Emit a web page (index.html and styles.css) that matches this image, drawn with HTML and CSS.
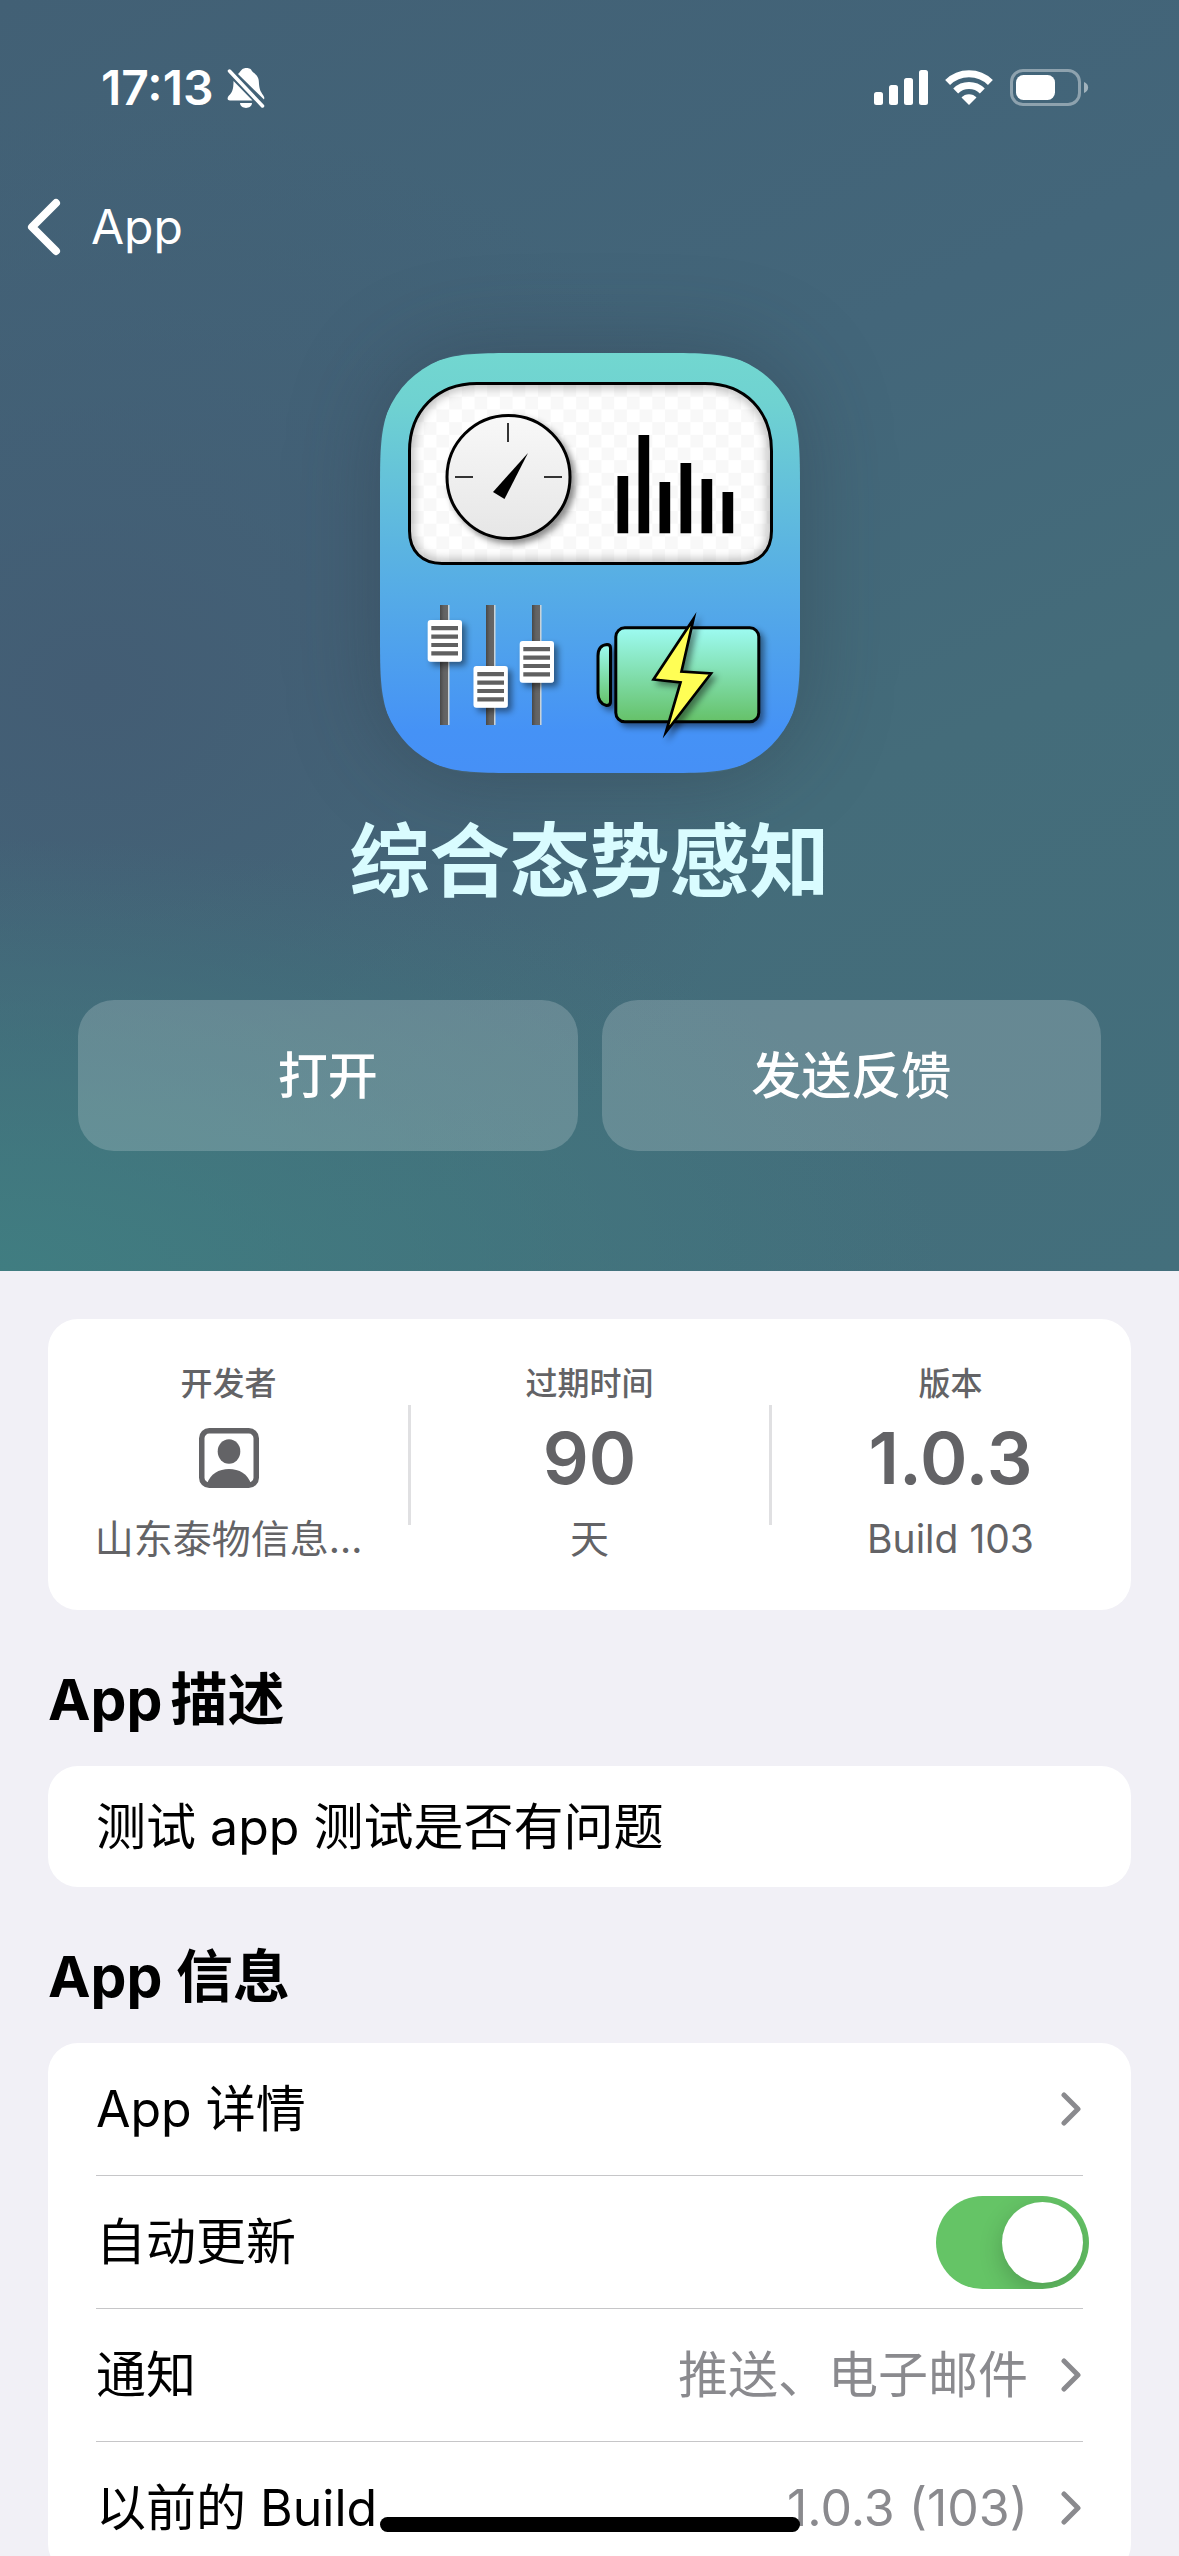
FILE: index.html
```html
<!DOCTYPE html>
<html lang="zh-CN">
<head>
<meta charset="utf-8">
<meta name="viewport" content="width=device-width, initial-scale=1">
<title>综合态势感知</title>
<link rel="stylesheet" href="styles.css">
</head>
<body>
<div class="screen">
  <header class="hero">
    <div class="status">
      <span class="status-left">
        <span class="clock">17:13</span>
        <svg class="bell" width="38" height="42" viewBox="0 0 38 42" fill="#fff" aria-hidden="true">
          <path d="M11 7 C13 5 13.500 4 15 2.500 C17 0.500 22 0.500 24 2.500 C25 4 25 4.500 27 6 C31 9 32 12 32 17 C32.500 23 34 25 36 28 C37.500 30 37.500 31 37 32.500 Z"/>
          <path d="M6.500 14 L25.500 33.500 H3 C0 33.500 0 30.500 2 28.500 C5 25.500 6.500 23 6.500 14 Z"/>
          <path d="M13 36 H25 C24.500 42.500 13.500 42.500 13 36 Z"/>
          <path d="M2.500 4 L35.500 39" stroke="#fff" stroke-width="3.500" stroke-linecap="round"/>
        </svg>
      </span>
      <span class="status-right">
        <svg width="54" height="36" viewBox="0 0 54 36" fill="#fff" aria-hidden="true">
          <rect x="0" y="22" width="9" height="13" rx="2.500"/>
          <rect x="15" y="15" width="9" height="20" rx="2.500"/>
          <rect x="30" y="8" width="9" height="27" rx="2.500"/>
          <rect x="45" y="0" width="9" height="35" rx="2.500"/>
        </svg>
        <svg width="48" height="36" viewBox="0 0 48 36" fill="none" stroke="#fff" aria-hidden="true">
          <path d="M2.600 12.600 A30.500 30.500 0 0 1 45.400 12.600" stroke-width="7"/>
          <path d="M10.700 21 A19 19 0 0 1 37.300 21" stroke-width="7"/>
          <path d="M16.500 27.500 C20 23 28 23 31.500 27.500 L24 35 Z" fill="#fff" stroke="none"/>
        </svg>
        <svg width="79" height="38" viewBox="0 0 79 38" fill="none" aria-hidden="true">
          <rect x="1.500" y="1.500" width="68" height="34" rx="11.500" stroke="#fff" stroke-opacity=".4" stroke-width="3"/>
          <rect x="6" y="6" width="39" height="25" rx="7.500" fill="#fff"/>
          <path d="M74 13 C79.500 15 79.500 22 74 24 Z" fill="#fff" fill-opacity=".5"/>
        </svg>
      </span>
    </div>
    <nav class="nav">
      <a class="back" href="#">
        <svg width="34" height="58" viewBox="0 0 34 58" fill="none" stroke="#fff" stroke-width="8" stroke-linecap="round" stroke-linejoin="round" aria-hidden="true"><path d="M29 5 L5 29 L29 53"/></svg>
        <span>App</span>
      </a>
    </nav>
    <svg class="app-icon" viewBox="0 0 420 420" aria-hidden="true">
      <defs>
        <linearGradient id="sky" x1="0" y1="0" x2="0" y2="1">
          <stop offset="0" stop-color="#72d7d0"/><stop offset=".12" stop-color="#6fd2d1"/><stop offset=".5" stop-color="#59b1e3"/><stop offset=".9" stop-color="#4592f6"/><stop offset="1" stop-color="#4690f6"/>
        </linearGradient>
        <linearGradient id="cell" x1="0" y1="0" x2="0" y2="1">
          <stop offset="0" stop-color="#9dfbf2"/><stop offset="1" stop-color="#65c168"/>
        </linearGradient>
        <linearGradient id="dial" x1="0" y1="0" x2="0" y2="1">
          <stop offset="0" stop-color="#f8f8f8"/><stop offset="1" stop-color="#e6e6e6"/>
        </linearGradient>
        <linearGradient id="track" x1="0" y1="0" x2="1" y2="0">
          <stop offset="0" stop-color="#484848"/><stop offset=".4" stop-color="#626262"/><stop offset=".8" stop-color="#666"/><stop offset=".9" stop-color="#cfd8dd"/><stop offset="1" stop-color="#cfd8dd"/>
        </linearGradient>
        <pattern id="checks" x="31" y="31" width="25.400" height="25.400" patternUnits="userSpaceOnUse">
          <rect width="25.400" height="25.400" fill="#fff"/>
          <rect width="12.700" height="12.700" fill="#f8f8f8"/><rect x="12.700" y="12.700" width="12.700" height="12.700" fill="#f8f8f8"/>
        </pattern>
        <path id="panel" d="M97 30.500 H325 C365 30.500 391.500 58 391.500 98 V178 C391.500 198 379 210.500 359 210.500 H62 C42 210.500 29.500 198 29.500 178 V98 C29.500 58 57 30.500 97 30.500 Z"/>
        <clipPath id="panel-clip"><use href="#panel"/></clipPath>
        <filter id="soft" x="-20%" y="-20%" width="140%" height="140%"><feGaussianBlur stdDeviation="5"/></filter>
        <filter id="drop" x="-30%" y="-30%" width="170%" height="170%"><feDropShadow dx="4" dy="4" stdDeviation="3" flood-opacity=".45"/></filter>
      </defs>
      <path fill="url(#sky)" d="M144 0 H276 C317 0 338 0 360 7 C385 16 404 35 413 60 C420 82 420 103 420 144 V276 C420 317 420 338 413 360 C404 385 385 404 360 413 C338 420 317 420 276 420 H144 C103 420 82 420 60 413 C35 404 16 385 7 360 C0 338 0 317 0 276 V144 C0 103 0 82 7 60 C16 35 35 16 60 7 C82 0 103 0 144 0 Z"/>
      <use href="#panel" fill="url(#checks)"/>
      <g clip-path="url(#panel-clip)"><use href="#panel" fill="none" stroke="#000" stroke-opacity=".3" stroke-width="8" filter="url(#soft)"/></g>
      <use href="#panel" fill="none" stroke="#000" stroke-width="3"/>
      <circle cx="128.500" cy="124" r="61.500" fill="url(#dial)" stroke="#000" stroke-width="3" filter="url(#drop)"/>
      <path d="M128 70 V89 M75 124 H93 M164 124 H182" stroke="#333" stroke-width="2"/>
      <path d="M148 100 L113 139 L124.500 146 Z"/>
      <path d="M237.500 123 h10.700 v57.300 h-10.700 Z M258.500 82 h10.700 v98.300 h-10.700 Z M279.500 129 h10.700 v51.300 h-10.700 Z M300.500 110 h10.700 v70.300 h-10.700 Z M321.500 126 h10.700 v54.300 h-10.700 Z M342.500 139 h10.700 v41.300 h-10.700 Z"/>
      <g fill="url(#track)">
        <rect x="60" y="252" width="9.500" height="120"/><rect x="106" y="252" width="9.500" height="120"/><rect x="152" y="252" width="9.500" height="120"/>
      </g>
      <g fill="#fff" filter="url(#drop)">
        <rect x="47.700" y="267" width="34.300" height="41.700" rx="3"/><rect x="93.500" y="313" width="34.300" height="41.700" rx="3"/><rect x="139.700" y="288" width="34.300" height="41.700" rx="3"/>
      </g>
      <path stroke="#606060" stroke-width="4.200" d="M51.300 275.200 h26.700 m-26.700 8.400 h26.700 m-26.700 8.400 h26.700 m-26.700 8.400 h26.700 M97.300 321.200 h26.700 m-26.700 8.400 h26.700 m-26.700 8.400 h26.700 m-26.700 8.400 h26.700 M143.300 296.200 h26.700 m-26.700 8.400 h26.700 m-26.700 8.400 h26.700 m-26.700 8.400 h26.700"/>
      <g stroke="#000" stroke-width="3" filter="url(#drop)">
        <rect x="235.800" y="274.800" width="143" height="94" rx="9" fill="url(#cell)"/>
        <path d="M227 291.500 Q230.500 291.500 230.500 295 V349 Q230.500 352.500 226.500 352.500 C220 351 218 346 218 340 V303 C218 296 221 292 227 291.500 Z" fill="url(#cell)"/>
      </g>
      <path d="M313.500 266 L301.500 318.500 L331 320.500 L286 379 L300.500 329.500 L273.500 326.500 Z" fill="#fffe54" stroke="#000" stroke-width="2.700" stroke-miterlimit="20" filter="url(#drop)"/>
    </svg>
    <h1 class="title">综合态势感知</h1>
    <div class="actions">
      <button class="action" type="button">打开</button>
      <button class="action" type="button">发送反馈</button>
    </div>
  </header>

  <main class="content">
    <section class="card stats">
      <div class="stat">
        <span class="stat-label">开发者</span>
        <span class="stat-value">
          <svg width="60" height="60" viewBox="0 0 60 60" fill="currentColor" aria-hidden="true">
            <rect x="2.750" y="2.750" width="54.500" height="54.500" rx="7.500" fill="none" stroke="currentColor" stroke-width="5.500"/>
            <ellipse cx="30" cy="23.500" rx="11.300" ry="12.200"/>
            <path d="M8 56 C11 46 20 41 30 41 C40 41 49 46 52 56 Z"/>
          </svg>
        </span>
        <span class="stat-note">山东泰物信息…</span>
      </div>
      <div class="stat">
        <span class="stat-label">过期时间</span>
        <span class="stat-value">90</span>
        <span class="stat-note">天</span>
      </div>
      <div class="stat">
        <span class="stat-label">版本</span>
        <span class="stat-value">1.0.3</span>
        <span class="stat-note">Build 103</span>
      </div>
    </section>

    <h2 class="heading heading-tight"><span>App</span><span>描述</span></h2>
    <section class="card">
      <p class="description">测试 app 测试是否有问题</p>
    </section>

    <h2 class="heading">App 信息</h2>
    <section class="card list">
      <a class="row" href="#">
        <span>App 详情</span>
        <svg class="chevron" viewBox="0 0 20 34" aria-hidden="true"><path d="M3 3 L17 17 L3 31"/></svg>
      </a>
      <div class="row">
        <label for="auto-update">自动更新</label>
        <input class="switch" id="auto-update" type="checkbox" role="switch" checked>
      </div>
      <a class="row" href="#">
        <span>通知</span>
        <span class="row-value">推送、电子邮件</span>
        <svg class="chevron" viewBox="0 0 20 34" aria-hidden="true"><path d="M3 3 L17 17 L3 31"/></svg>
      </a>
      <a class="row" href="#">
        <span>以前的 Build</span>
        <span class="row-value">1.0.3 (103)</span>
        <svg class="chevron" viewBox="0 0 20 34" aria-hidden="true"><path d="M3 3 L17 17 L3 31"/></svg>
      </a>
    </section>
  </main>
</div>
<div class="home-indicator"></div>
</body>
</html>
```
FILE: styles.css
```css
* { box-sizing: border-box; }

body {
  margin: 0;
  background: #f1f0f6;
  color: #000;
  font-family: Inter, "Noto Sans CJK SC", sans-serif;
  font-size: 50px;
  line-height: 60px;
}

a { color: inherit; text-decoration: none; }
svg { display: block; flex: none; }

.screen {
  height: 100vh;
  overflow-y: auto;
  scrollbar-width: none;
}

/* Header */
.hero {
  display: flex;
  flex-direction: column;
  align-items: center;
  padding-bottom: 120px;
  color: #fff;
  background:
    radial-gradient(ellipse 80% 34% at 0% 100%, #407d81 0%, rgba(64, 125, 129, 0) 100%),
    radial-gradient(ellipse 60% 46% at 8% 54%, #435d74 0%, rgba(67, 93, 116, 0) 100%),
    linear-gradient(155deg, #426075 0%, #43667a 40%, #446c7a 65%, #436f7c 100%);
}

.status {
  align-self: stretch;
  display: flex;
  align-items: center;
  justify-content: space-between;
  height: 176px;
  padding: 0 90px 0 101px;
}
.status-left { display: flex; align-items: center; gap: 14px; }
.status-right { display: flex; align-items: center; gap: 17px; }
.clock { font-size: 48px; font-weight: 600; }

.nav { align-self: stretch; height: 102px; display: flex; align-items: center; padding: 0 27px; }
.back { display: flex; align-items: center; gap: 30px; font-size: 48px; }

.app-icon {
  width: 420px;
  height: 420px;
  margin-top: 75px;
  border-radius: 96px;
  box-shadow: 0 0 90px rgba(40, 50, 60, .35);
}

.title {
  margin: 40px 0 0;
  font-size: 80px;
  line-height: 96px;
  font-weight: 700;
  color: #d9fcff;
}

.actions {
  align-self: stretch;
  display: grid;
  grid-template-columns: 1fr 1fr;
  gap: 24px;
  margin-top: 91px;
  padding: 0 78px;
}
.action {
  height: 151px;
  border: 0;
  border-radius: 36px;
  background: rgba(255, 255, 255, .19);
  color: #fff;
  font: inherit;
  font-weight: 500;
}

/* Content */
.content { padding: 48px 48px 96px; }
.card { border-radius: 30px; background: #fff; }

.stats { display: grid; grid-template-columns: repeat(3, 1fr); padding: 43px 0 42px; }
.stat {
  position: relative;
  display: flex;
  flex-direction: column;
  align-items: center;
  color: #636366;
}
.stat + .stat::before {
  content: "";
  position: absolute;
  left: -1px;
  top: 43px;
  width: 3px;
  height: 120px;
  background: #e0e0e2;
}
.stat-label { font-size: 32px; line-height: 44px; font-weight: 500; }
.stat-value {
  display: flex;
  align-items: center;
  height: 104px;
  font-size: 72px;
  font-weight: 600;
}
.stat-note { font-size: 39px; line-height: 58px; }

.heading {
  margin: 50px 0 26px;
  font-size: 57px;
  line-height: 80px;
  font-weight: 700;
}
.heading-tight { display: flex; gap: 8px; }

.description { margin: 0; padding: 31px 48px 30px; }

.list { padding: 0 48px; }
.row { box-sizing: content-box; display: flex; align-items: center; gap: 33px; height: 132px; }
.row + .row { border-top: 1px solid #c6c6c8; }
.row > :first-child { margin-right: auto; }
.row-value { color: #8a8a8e; }
.chevron {
  width: 20px;
  height: 34px;
  margin-right: 2px;
  fill: none;
  stroke: #8a8a8e;
  stroke-width: 5;
  stroke-linecap: round;
  stroke-linejoin: round;
}

.switch {
  appearance: none;
  display: flex;
  align-items: center;
  width: 153px;
  height: 93px;
  margin: 0 -6px 0 0;
  padding: 6px;
  border-radius: 47px;
  background: #e9e9eb;
  overflow: hidden;
}
.switch::before {
  content: "";
  width: 81px;
  height: 81px;
  border-radius: 50%;
  background: #fff;
  box-shadow: 0 8px 24px rgba(0, 0, 0, .2);
}
.switch:checked { justify-content: flex-end; background: #65c466; }

.home-indicator {
  position: fixed;
  left: 50%;
  bottom: 24px;
  width: 420px;
  height: 15px;
  margin-left: -210px;
  border-radius: 8px;
  background: #000;
}
```
